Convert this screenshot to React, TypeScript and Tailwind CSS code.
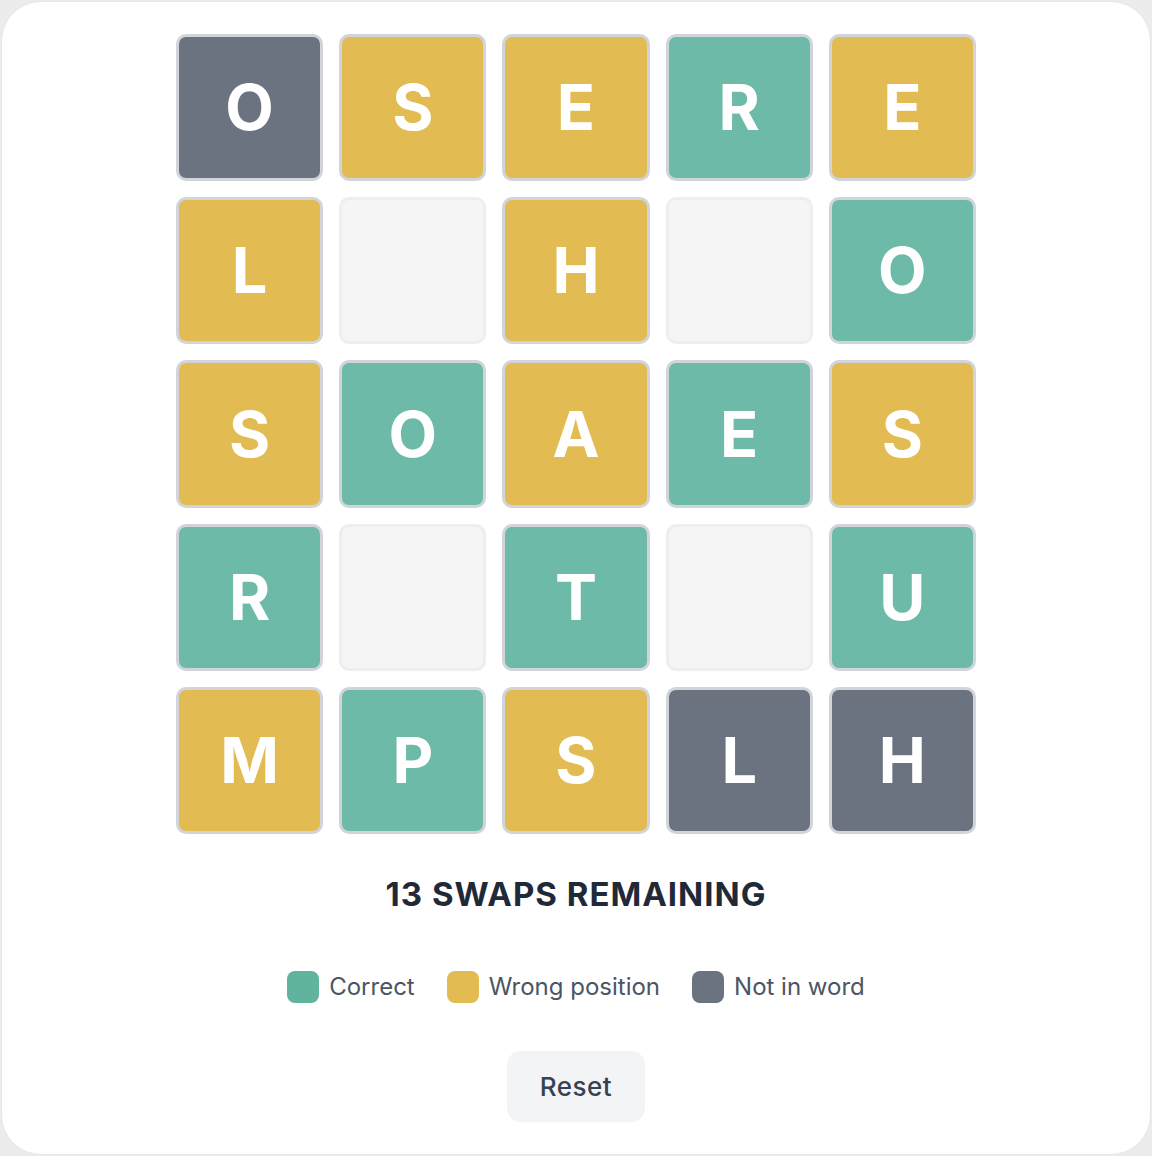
import React from "react";

type Mark = "correct" | "present" | "absent" | "empty";

const ROWS: [string, Mark][][] = [
  [["O", "absent"], ["S", "present"], ["E", "present"], ["R", "correct"], ["E", "present"]],
  [["L", "present"], ["", "empty"], ["H", "present"], ["", "empty"], ["O", "correct"]],
  [["S", "present"], ["O", "correct"], ["A", "present"], ["E", "correct"], ["S", "present"]],
  [["R", "correct"], ["", "empty"], ["T", "correct"], ["", "empty"], ["U", "correct"]],
  [["M", "present"], ["P", "correct"], ["S", "present"], ["L", "absent"], ["H", "absent"]],
];

const tileBg: Record<Mark, string> = {
  correct: "bg-[#6dbaa8] border-[#d1d5db]",
  present: "bg-[#e2bc53] border-[#d1d5db]",
  absent: "bg-[#6b7280] border-[#d1d5db]",
  empty: "bg-[#f5f5f5] border-[#eeeeee]",
};

function Tile({ letter, mark }: { letter: string; mark: Mark }) {
  return (
    <div
      className={`aspect-square rounded-[10px] border-[3px] flex items-center justify-center text-white font-bold text-[63px] leading-none ${tileBg[mark]}`}
    >
      {letter}
    </div>
  );
}

function Legend({ color, label }: { color: string; label: string }) {
  return (
    <div className="flex items-center gap-2.5">
      <span className={`w-8 h-8 rounded-lg ${color}`} />
      <span className="text-2xl text-[#4b5563]">{label}</span>
    </div>
  );
}

export default function App() {
  return (
    <div className="min-h-[1156px] bg-[#ececec] p-px" style={{ fontFamily: "Inter, 'Liberation Sans', sans-serif" }}>
      <div className="h-[1154px] rounded-[40px] border border-[#e5e7eb] bg-white pt-[32px] flex flex-col items-center">
        <div className="w-[800px] grid grid-cols-5 gap-4">
          {ROWS.flat().map(([l, m], i) => (
            <Tile key={i} letter={l} mark={m} />
          ))}
        </div>
        <div className="mt-10 text-[33px] leading-10 tracking-[0.03em] font-bold text-[#1f2937]">13 SWAPS REMAINING</div>
        <div className="mt-[57px] flex items-center gap-8">
          <Legend color="bg-[#60b49e]" label="Correct" />
          <Legend color="bg-[#e2bc53]" label="Wrong position" />
          <Legend color="bg-[#6b7280]" label="Not in word" />
        </div>
        <button className="mt-12 w-[138px] h-[71px] rounded-[14px] bg-[#f3f4f6] text-[26px] tracking-[0.02em] font-medium text-[#374151]">
          Reset
        </button>
      </div>
    </div>
  );
}
